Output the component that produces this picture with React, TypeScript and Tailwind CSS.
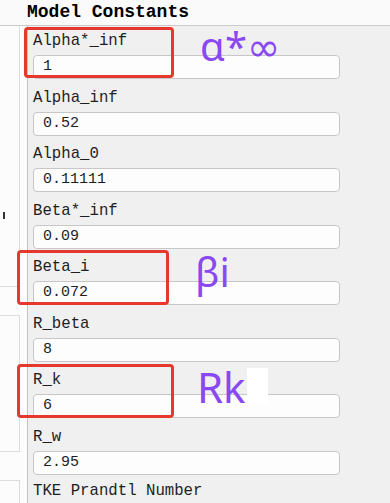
const rows = [
  { label: 'Alpha*_inf', value: '1' },
  { label: 'Alpha_inf', value: '0.52' },
  { label: 'Alpha_0', value: '0.11111' },
  { label: 'Beta*_inf', value: '0.09' },
  { label: 'Beta_i', value: '0.072' },
  { label: 'R_beta', value: '8' },
  { label: 'R_k', value: '6' },
  { label: 'R_w', value: '2.95' },
]

function Field({ label, value, first }: { label: string; value: string; first?: boolean }) {
  return (
    <div>
      <div
        className={`${first ? 'h-[29px]' : 'h-[32.5px]'} flex items-end pb-[4px] text-[15.7px] leading-[20px] text-[#1e1e1e]`}
      >
        {label}
      </div>
      <div className="h-[24px] w-[307px] rounded-[4px] border border-[#c7c7c7] bg-[#fdfdfd] pl-[9px] text-[15px] leading-[22px] text-[#1e1e1e]">
        {value}
      </div>
    </div>
  )
}

export default function App() {
  return (
    <div
      className="relative h-[503px] w-[390px] overflow-hidden bg-[#f0f0f0]"
      style={{ fontFamily: '"Liberation Mono", "DejaVu Sans Mono", monospace' }}
    >
      <div className="flex h-[26px] items-end border-b border-[#c9c9c9] bg-[#fafafa] pb-[3px] pl-[27px] text-[18px] font-bold leading-[20px] text-black">
        Model Constants
      </div>
      <div className="flex h-[477px]">
        <div className="flex w-[28px] flex-col gap-[28px] border-r border-[#c4c4c4] bg-[#fcfcfc]">
          <div className="h-[261px] w-[20px] border-r border-b border-[#dcdcdc] pt-[186px] pl-[3px]">
            <div className="h-[7px] w-[1.5px] bg-[#333]" />
          </div>
          <div className="h-[137px] w-[20px] border-y border-r border-[#dcdcdc]" />
          <div className="flex-1 w-[20px] border-t border-r border-[#dcdcdc]" />
        </div>
        <div className="flex-1 pl-[5px]">
          {rows.map((r, i) => (
            <Field key={r.label} label={r.label} value={r.value} first={i === 0} />
          ))}
          <div className="flex h-[32.5px] items-end pb-[6px] text-[15.7px] leading-[20px] text-[#1e1e1e]">
            TKE Prandtl Number
          </div>
        </div>
      </div>

      {/* annotations */}
      <div className="absolute left-[24px] top-[27px] h-[51px] w-[150px] rounded-[4px] border-[3px] border-[#e5392e]" />
      <div className="absolute left-[17px] top-[250px] h-[55px] w-[152px] rounded-[4px] border-[3px] border-[#e5392e]" />
      <div className="absolute left-[17px] top-[364px] h-[54px] w-[157px] rounded-[4px] border-[3px] border-[#e5392e]" />

      <div
        className="absolute left-[200px] top-[22px] text-[40px] leading-[48px] text-[#8a48f2]"
        style={{ fontFamily: '"Noto Sans", "DejaVu Sans", sans-serif' }}
      >
        α*∞
      </div>
      <div
        className="absolute left-[195px] top-[248px] text-[40px] leading-[48px] text-[#8a48f2]"
        style={{ fontFamily: '"Noto Sans", "DejaVu Sans", sans-serif' }}
      >
        βi
      </div>
      <div className="absolute left-[247px] top-[368px] h-[37px] w-[21px] bg-white" />
      <div
        className="absolute left-[197px] top-[362px] text-[42px] leading-[50px] text-[#8a48f2]"
        style={{ fontFamily: '"Noto Sans", "DejaVu Sans", sans-serif' }}
      >
        Rk
      </div>
    </div>
  )
}
